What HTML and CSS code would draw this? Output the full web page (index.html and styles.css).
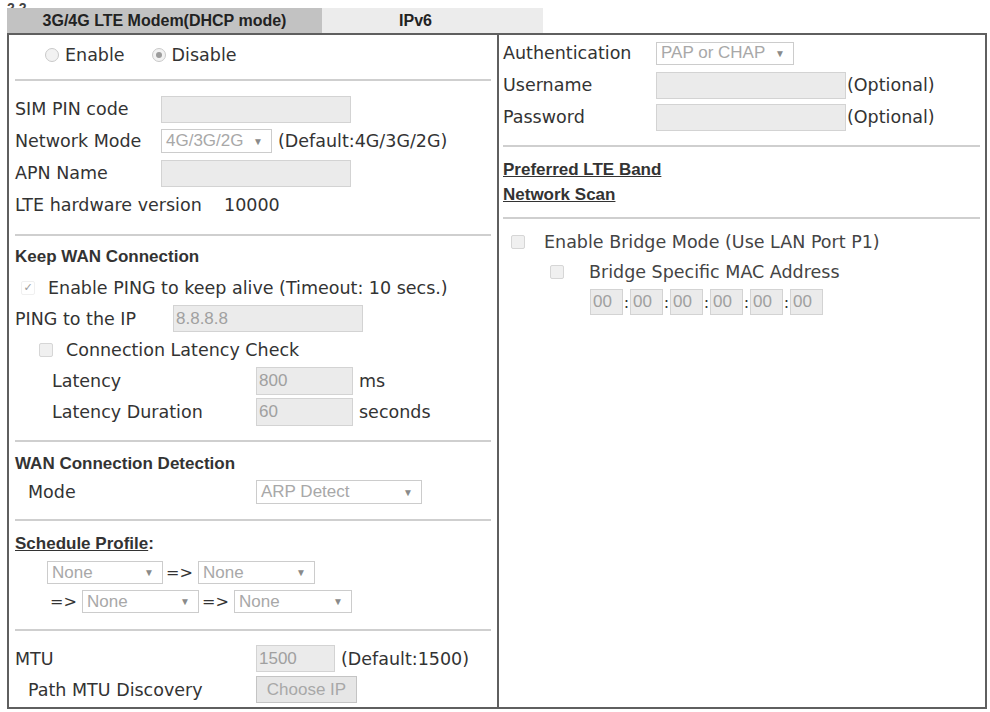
FILE: index.html
```html
<!DOCTYPE html>
<html>
<head>
  <meta charset="utf-8">
  <title>WAN 2 - 3G/4G LTE Modem</title>
  <link rel="stylesheet" href="styles.css">
</head>
<body>
  <div class="crumb">2.2</div>
  <div class="tabs">
    <div class="tab active">3G/4G LTE Modem(DHCP mode)</div>
    <div class="tab">IPv6</div>
  </div>
  <form class="box" name="wan">
    <div class="col left">
      <div class="sec s-radio">
        <div class="row r30">
          <span class="radio"></span><span class="rtext">Enable</span>
          <span class="radio on"></span><span class="rtext">Disable</span>
        </div>
      </div>

      <div class="sec s-sim">
        <div class="row r32"><span class="lbl" style="width:146px">SIM PIN code</span><input class="field w190" type="text" disabled></div>
        <div class="row r32"><span class="lbl" style="width:146px">Network Mode</span><span class="select w111">4G/3G/2G<i>&#9660;</i></span><span class="note">(Default:4G/3G/2G)</span></div>
        <div class="row r32"><span class="lbl" style="width:146px">APN Name</span><input class="field w190" type="text" disabled></div>
        <div class="row r32"><span class="lbl" style="width:209px">LTE hardware version</span>10000</div>
      </div>

      <div class="sec s-keep">
        <div class="row r31"><b class="head">Keep WAN Connection</b></div>
        <div class="row r31"><span class="check on ind6">&#10003;</span><span class="ctext">Enable PING to keep alive (Timeout: 10 secs.)</span></div>
        <div class="row r31"><span class="lbl" style="width:158px">PING to the IP</span><span class="field w190 val">8.8.8.8</span></div>
        <div class="row r31"><span class="check ind24"></span><span class="ctext">Connection Latency Check</span></div>
        <div class="row r31 ind37"><span class="lbl" style="width:204px">Latency</span><span class="field w97 val">800</span><span class="note">ms</span></div>
        <div class="row r31 ind37"><span class="lbl" style="width:204px">Latency Duration</span><span class="field w97 val">60</span><span class="note">seconds</span></div>
      </div>

      <div class="sec s-detect">
        <div class="row r28"><b class="head">WAN Connection Detection</b></div>
        <div class="row r28 ind13"><span class="lbl" style="width:228px">Mode</span><span class="select w166">ARP Detect<i>&#9660;</i></span></div>
      </div>

      <div class="sec s-sched">
        <div class="row r28"><b class="head"><u>Schedule Profile</u>:</b></div>
        <div class="row r29 ind32">
          <span class="select w116">None<i>&#9660;</i></span><span class="arrow">=&gt;</span><span class="select w117">None<i>&#9660;</i></span>
        </div>
        <div class="row r29 ind32">
          <span class="arrow">=&gt;</span><span class="select w117">None<i>&#9660;</i></span><span class="arrow">=&gt;</span><span class="select w118">None<i>&#9660;</i></span>
        </div>
      </div>

      <div class="sec s-mtu last">
        <div class="row r31"><span class="lbl" style="width:241px">MTU</span><span class="field w79 val">1500</span><span class="note">(Default:1500)</span></div>
        <div class="row r31 ind13"><span class="lbl" style="width:228px">Path MTU Discovery</span><span class="button">Choose IP</span></div>
      </div>
    </div>

    <div class="col right">
      <div class="sec s-auth">
        <div class="row r32"><span class="lbl" style="width:153px">Authentication</span><span class="select w138">PAP or CHAP<i>&#9660;</i></span></div>
        <div class="row r32"><span class="lbl" style="width:153px">Username</span><input class="field w190" type="text" disabled><span class="opt">(Optional)</span></div>
        <div class="row r32"><span class="lbl" style="width:153px">Password</span><input class="field w190" type="password" disabled><span class="opt">(Optional)</span></div>
      </div>

      <div class="sec s-links">
        <div class="row r25"><a class="link" href="#">Preferred LTE Band</a></div>
        <div class="row r25"><a class="link" href="#">Network Scan</a></div>
      </div>

      <div class="sec s-bridge last">
        <div class="row r30"><span class="check ind8"></span><span class="btext">Enable Bridge Mode (Use LAN Port P1)</span></div>
        <div class="row r30"><span class="check ind47"></span><span class="btext gap2">Bridge Specific MAC Address</span></div>
        <div class="row r30 mac">
          <span class="field w33 val">00</span><span class="colon">:</span>
          <span class="field w33 val">00</span><span class="colon">:</span>
          <span class="field w33 val">00</span><span class="colon">:</span>
          <span class="field w33 val">00</span><span class="colon">:</span>
          <span class="field w33 val">00</span><span class="colon">:</span>
          <span class="field w33 val">00</span>
        </div>
      </div>
    </div>
  </form>
</body>
</html>
```

FILE: styles.css
```css
body {margin: 0;
      background-color: #ffffff;
      color: #333333;
      font-family: "DejaVu Sans", Verdana, sans-serif;
      font-size: 17.5px;}

.crumb {height: 8px;
        line-height: 0;
        overflow: hidden;
        padding-left: 7px;
        font: bold 14px "Liberation Sans", Arial, sans-serif;
        color: #444444;}

/* tab strip above the settings box */
.tabs {display: flex;
       height: 25px;
       margin-left: 7px;}

.tab {width: 221px;
      padding-right: 34px;
      box-sizing: border-box;
      background-color: #ececec;
      font: bold 16px "Liberation Sans", Arial, sans-serif;
      color: #222222;
      line-height: 25px;
      text-align: center;}

.tab.active {width: 315px;
             padding-right: 0;
             background-color: #c2c2c2;}

.box {display: flex;
      width: 976px;
      height: 672px;
      margin: 0 0 0 7px;
      border: solid #5f5f5f 2px;}

.col {box-sizing: border-box;}

.left {width: 488px;
       padding-left: 6px;
       padding-right: 6px;}

.right {width: 486px;
        border-left: solid #5f5f5f 2px;
        padding-left: 4px;
        padding-right: 3px;}

.sec {border-bottom: solid #cfcfcf 2px;}

.sec.last {border-bottom: none;}

/* section spacing, top to bottom */
.s-radio {padding: 5px 0 9px 0;}
.s-sim {padding: 12px 0 13px 0;}
.s-keep {padding: 5px 0 13px 0;}
.s-detect {padding: 8px 0 13px 0;}
.s-sched {padding: 9px 0 13px 0;}
.s-mtu {padding-top: 12px;}
.s-auth {padding: 2px 0 12px 0;}
.s-links {padding: 10px 0 10px 0;}
.s-bridge {padding-top: 8px;}

.row {display: flex;
      align-items: center;
      white-space: nowrap;}

.r25 {height: 25px;}
.r28 {height: 28px;}
.r29 {height: 29px;}
.r30 {height: 30px;}
.r31 {height: 31px;}
.r32 {height: 32px;}

.ind13 {padding-left: 13px;}
.ind32 {padding-left: 32px;}
.ind37 {padding-left: 37px;}

.lbl {flex: none;}

.head {font: bold 17px "Liberation Sans", Arial, sans-serif;
       color: #333333;}

.link {font: bold 17px "Liberation Sans", Arial, sans-serif;
       color: #333333;
       text-decoration: underline;}

.note {margin-left: 6px;}

/* greyed out inputs */
.field {display: inline-block;
        box-sizing: border-box;
        height: 27px;
        margin: 0;
        padding: 0 2px;
        background-color: #ebebeb;
        border: solid #d3d3d3 1px;
        font: 17px "Liberation Sans", Arial, sans-serif;
        color: #a0a0a0;
        line-height: 25px;}

.w33 {width: 33px; height: 26px; line-height: 24px;}
.w79 {width: 79px;}
.w97 {width: 97px; height: 28px; line-height: 26px;}
.w190 {width: 190px;}

.select {display: inline-flex;
         justify-content: space-between;
         align-items: center;
         box-sizing: border-box;
         height: 24px;
         padding: 0 8px 0 4px;
         background-color: #ffffff;
         border: solid #cccccc 1px;
         font: 17px "Liberation Sans", Arial, sans-serif;
         color: #a8a8a8;}

.select i {font-style: normal;
           font-size: 10px;
           color: #8a8a8a;}

.w111 {width: 111px;}
.w116 {width: 116px; height: 23px;}
.w117 {width: 117px; height: 23px;}
.w118 {width: 118px; height: 23px;}
.w138 {width: 138px; height: 23px;}
.w166 {width: 166px;}

.arrow {width: 35px;
        padding-left: 3px;
        box-sizing: border-box;
        font-size: 16px;}

.button {display: inline-block;
         box-sizing: border-box;
         width: 101px;
         height: 27px;
         background-color: #e6e6e6;
         border: solid #c4c4c4 1px;
         font: 17px "Liberation Sans", Arial, sans-serif;
         color: #a8a8a8;
         line-height: 25px;
         text-align: center;}

.opt {margin-left: 1px;}

/* disabled radio buttons and check boxes */
.radio {display: inline-block;
        width: 12px;
        height: 12px;
        margin-left: 30px;
        border: solid #c9c9c9 1px;
        border-radius: 50%;
        background-color: #f2f2f2;
        position: relative;}

.radio + .rtext {margin-left: 6px;}

.radio.on {margin-left: 27px;}

.radio.on::after {content: "";
                  position: absolute;
                  left: 3px;
                  top: 3px;
                  width: 6px;
                  height: 6px;
                  border-radius: 50%;
                  background-color: #9c9c9c;}

.check {display: inline-block;
        box-sizing: border-box;
        width: 14px;
        height: 14px;
        border: solid #d6d6d6 1px;
        border-radius: 2px;
        background-color: #f0f0f0;
        font-size: 11px;
        line-height: 12px;
        text-align: center;
        color: #9a9a9a;}

.check.on {border-color: #f0f0f0;
           background-color: #ffffff;}

.ind6 {margin-left: 6px;}
.ind8 {margin-left: 8px;}
.ind24 {margin-left: 24px;}
.ind47 {margin-left: 47px;}

.ctext {margin-left: 13px;}

.btext {margin-left: 19px;
        color: #444444;}

.btext.gap2 {margin-left: 25px;}

.mac {padding-left: 87px;}

.colon {width: 7px;
        text-align: center;
        font-size: 16px;}
```
